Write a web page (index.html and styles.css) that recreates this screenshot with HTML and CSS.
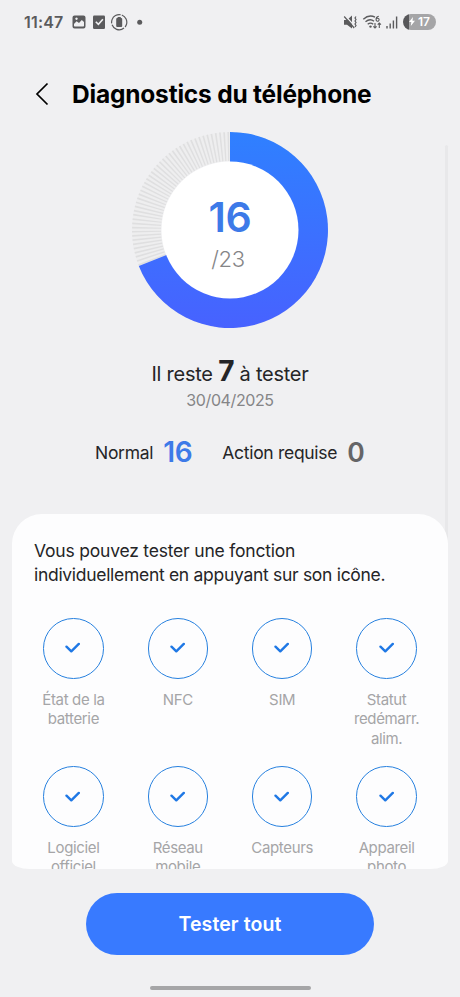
FILE: index.html
```html
<!DOCTYPE html>
<html lang="fr">
<head>
<meta charset="utf-8">
<title>Diagnostics du téléphone</title>
<link rel="stylesheet" href="styles.css">
</head>
<body>
<svg class="defs" aria-hidden="true">
  <symbol id="check" viewBox="0 0 16 12"><path d="M1.500 4.700 6.300 9.300l7.500-7.400" fill="none" stroke="currentColor" stroke-width="2.400" stroke-linecap="round" stroke-linejoin="round"/></symbol>
</svg>
<div class="screen">
  <div class="status">
    <span class="clock">11:47</span>
    <svg class="status-left" width="74" height="18" viewBox="0 0 74 18">
      <g fill="#5b5b5d">
        <path fill-rule="evenodd" d="M2.500 2.500h9a2 2 0 0 1 2 2v9a2 2 0 0 1-2 2h-9a2 2 0 0 1-2-2v-9a2 2 0 0 1 2-2ZM2 11v1.800q0 .7.7.7h8.600q.7 0 .7-.7V9L9.800 7 7 10 4.600 8.300ZM4.500 4.500a1.200 1.200 0 1 0 .01 0Z"/>
        <rect x="21" y="2.500" width="12" height="13.500" rx="1.200"/>
        <rect x="44.200" y="5" width="6" height="9" rx="1"/>
        <rect x="45.600" y="4" width="3.200" height="2"/>
        <circle cx="67.700" cy="9.200" r="2.500"/>
      </g>
      <path d="m23.800 8.700 2.600 2.600 4.500-5" fill="none" stroke="#f0f0f2" stroke-width="1.600"/>
      <circle cx="47.200" cy="9.200" r="7.600" fill="none" stroke="#5b5b5d" stroke-width="1.200" stroke-dasharray="14.400 1.520" transform="rotate(-70 47.200 9.200)"/>
    </svg>
    <svg class="status-right" width="58" height="18" viewBox="0 0 58 18">
      <g fill="#5b5b5d">
        <path d="M1 7h3l5-4.500v13L4 11.800H1Z"/>
        <rect x="43.300" y="13" width="1.400" height="2.500"/><rect x="46.500" y="10.500" width="1.400" height="5"/><rect x="49.700" y="7.500" width="1.400" height="8"/><rect x="52.900" y="3.500" width="1.400" height="12"/>
        <circle cx="27.500" cy="13.600" r="1.200"/>
      </g>
      <path d="m2 2.500 10.500 11.500" stroke="#f0f0f2" stroke-width="1.200"/>
      <g fill="none" stroke="#5b5b5d" stroke-width="1.200">
        <path d="m1.200 3.500 10 11.500M13 3.500l-1 1.500 1 1.500-1 1.500 1 1.500-1 1.500 1 1.500-1 1.500"/>
        <path d="M20.300 6.200Q26 1.200 32 4.200M22.500 8.800q4.500-3.700 8.500-.5M24.700 11.200q2.800-2.200 5.500 0" stroke-width="1.400"/>
        <path d="M35.800 3.200q-3 .5-2.700 3.300a1.500 1.500 0 1 0 1.500-1.300q-1 0-1.500 1M32 10v5m-1.600-1.700 1.600 1.700 1.600-1.700M36.300 15v-5m-1.600 1.700 1.600-1.700 1.600 1.700" stroke-width="1.100"/>
      </g>
    </svg>
    <span class="battery">
      <svg width="6" height="9" viewBox="0 0 6 9"><path d="M4 0 0 5h2.300L1.800 9 6 3.800H3.500Z" fill="#fff"/></svg>17</span>
  </div>
  <header class="header">
    <svg class="back" width="14" height="24" viewBox="0 0 14 24"><path d="M12.500 1.500 2 12l10.500 10.500" fill="none" stroke="#000" stroke-width="1.700"/></svg>
    <h1>Diagnostics du téléphone</h1>
  </header>
  <section class="ring-box">
    <svg class="ring" width="198" height="198" viewBox="-99 -99 198 198">
      <defs><linearGradient id="blue" x1="0" y1="-98" x2="0" y2="98" gradientUnits="userSpaceOnUse"><stop offset="0" stop-color="#2f80ff"/><stop offset="1" stop-color="#4762ff"/></linearGradient></defs>
      <circle r="83.500" fill="none" stroke="#eeeeef" stroke-width="29"/>
      <circle r="83.500" fill="none" stroke="#dfdfe0" stroke-width="29" pathLength="360" stroke-dasharray="1 1.500" transform="rotate(-91.500)"/>
      <path d="M0-98A98 98 0 1 1-91.200 35.900L0 0Z" fill="url(#blue)"/>
      <circle r="68.500" fill="#fff"/>
    </svg>
    <div class="score"><strong>16</strong><span>/23</span></div>
  </section>
  <p class="remaining">Il reste <b>7</b> à tester</p>
  <p class="date">30/04/2025</p>
  <div class="totals"><span class="normal">Normal</span><b class="ok">16</b><span class="action">Action requise</span><b class="ko">0</b></div>
  <main class="card">
    <p class="intro">Vous pouvez tester une fonction<br><span>individuellement en appuyant sur son icône.</span></p>
    <div class="grid">
      <div class="item"><i><svg><use href="#check"/></svg></i><span>État de la<br>batterie</span></div>
      <div class="item"><i><svg><use href="#check"/></svg></i><span>NFC</span></div>
      <div class="item"><i><svg><use href="#check"/></svg></i><span>SIM</span></div>
      <div class="item"><i><svg><use href="#check"/></svg></i><span>Statut<br>redémarr.<br>alim.</span></div>
      <div class="item"><i><svg><use href="#check"/></svg></i><span>Logiciel<br>officiel</span></div>
      <div class="item"><i><svg><use href="#check"/></svg></i><span>Réseau<br>mobile</span></div>
      <div class="item"><i><svg><use href="#check"/></svg></i><span>Capteurs</span></div>
      <div class="item"><i><svg><use href="#check"/></svg></i><span>Appareil<br>photo</span></div>
    </div>
  </main>
  <button class="test-all">Tester tout</button>
  <div class="home-bar"></div>
  <div class="scrollbar"></div>
</div>
</body>
</html>
```
FILE: styles.css
```css
* { box-sizing: border-box; }
body { margin: 0; background: #f0f0f2; font-family: Inter, "Liberation Sans", sans-serif; color: #252527; }
h1, p { margin: 0; }
.defs { display: none; }
.screen { position: relative; width: 460px; height: 997px; overflow: hidden; display: flex; flex-direction: column; align-items: center; white-space: nowrap; }
.status { width: 100%; height: 43px; padding: 0 24px; display: flex; align-items: center; flex: none; }
.clock { width: 48px; font-size: 16px; font-weight: 600; letter-spacing: .2px; color: #5b5b5d; }
.status-right { margin-left: auto; margin-right: 2px; }
.battery { width: 33px; height: 16px; border-radius: 8px; background: linear-gradient(90deg, #57575a 6px, #a5a5a7 6px); color: #fff; font-size: 12px; font-weight: 600; display: flex; align-items: center; padding-left: 6px; gap: 3px; }
.header { width: 100%; height: 88px; flex: none; padding: 14px 0 0 35px; display: flex; align-items: center; }
.back { margin-right: 23px; }
h1 { color: #000; font-size: 24.500px; line-height: 30px; font-weight: 700; letter-spacing: -.2px; }
.ring-box { display: grid; place-items: center; width: 198px; height: 198px; flex: none; }
.ring, .score { grid-area: 1 / 1; }
.score { display: flex; flex-direction: column; align-items: center; padding-top: 7px; }
.score strong { font-size: 41px; line-height: 46px; font-weight: 600; color: #3d7ae8; letter-spacing: -.3px; }
.score span { font-size: 22px; line-height: 30px; font-weight: 300; color: #858587; margin: 4px 4px 0 0; letter-spacing: -.3px; }
.remaining { margin-top: 25px; height: 35px; line-height: 35px; font-size: 20px; letter-spacing: -.25px; }
.remaining b { font-size: 28px; }
.date { height: 22px; line-height: 22px; font-size: 16px; color: #858587; letter-spacing: -.4px; }
.totals { width: 270px; margin-top: 23px; height: 36px; display: flex; align-items: center; font-size: 17.500px; letter-spacing: -.3px; }
.totals b { font-size: 28px; font-weight: 600; }
.ok { margin-left: 10px; color: #3d7ae8; }
.action { margin-left: 30px; }
.ko { margin-left: 10px; color: #656567; }
.totals .ko { font-size: 26.500px; }
.card { width: 436px; height: 355px; flex: none; margin-top: 44px; padding: 25px 10px 0; overflow: hidden; background: #fdfdfe; border-radius: 30px 30px 18px 18px / 30px 30px 8px 8px; }
.intro { padding-left: 12px; height: 79px; font-size: 17.500px; line-height: 24px; letter-spacing: -.2px; }
.intro span { letter-spacing: -.3px; }
.grid { display: grid; grid-template-columns: repeat(4, 104.400px); justify-content: center; grid-auto-rows: 148.400px; }
.item { display: flex; flex-direction: column; align-items: center; text-align: center; font-size: 15px; line-height: 19.500px; color: #a5a5a7; letter-spacing: -.35px; }
.item i { width: 60.500px; height: 60.500px; border: 1.400px solid #2781df; border-radius: 50%; display: grid; place-items: center; color: #1f78e5; margin-bottom: 11px; flex: none; }
.item svg { width: 16px; height: 12px; display: block; }
.test-all { width: 288px; height: 62px; flex: none; margin-top: 24px; border: 0; border-radius: 31px; padding: 0; background: #387aff; color: #fff; font: 600 19.500px Inter, "Liberation Sans", sans-serif; letter-spacing: .1px; }
.home-bar { width: 161px; height: 4px; border-radius: 2px; background: #a5a5a7; margin-top: 31px; flex: none; }
.scrollbar { position: absolute; left: 445px; top: 145px; width: 3px; height: 395px; border-radius: 2px; background: #e8e8ea; z-index: -1; }
```
